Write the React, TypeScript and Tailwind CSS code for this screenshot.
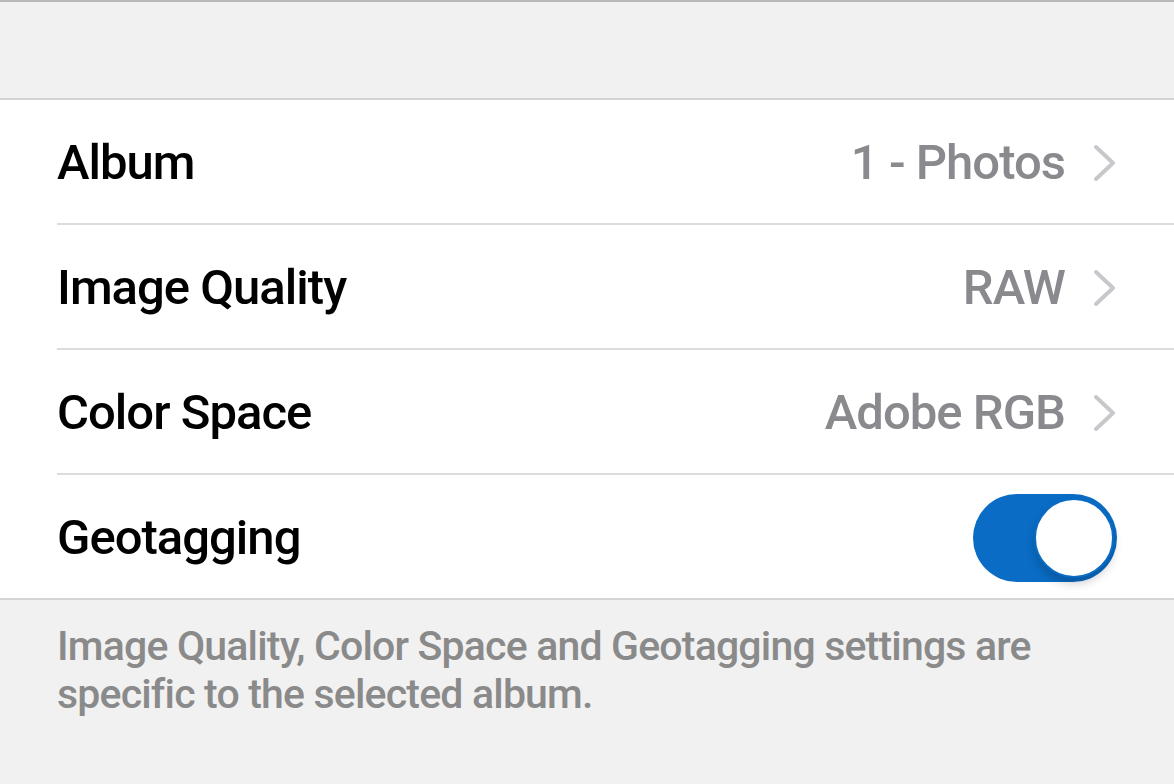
import React from 'react';

const font = { fontFamily: 'Roboto, "Noto Sans", sans-serif' };

function Chevron() {
  return (
    <svg width="24" height="38" viewBox="0 0 24 38" className="ml-[28px] shrink-0">
      <path d="M3 3 L20 19 L3 35" fill="none" stroke="#c7c7cc" strokeWidth="4" strokeLinecap="round" strokeLinejoin="round" />
    </svg>
  );
}

function Row({ label, value, last, children }: { label: string; value?: string; last?: boolean; children?: React.ReactNode }) {
  return (
    <div className="pl-[57px]">
      <div className={`flex items-center pr-[57px] pt-[2px] ${last ? 'h-[123px]' : 'h-[125px] border-b-2 border-[#dcdcdc]'}`}>
        <span className="flex-1 text-[49px] font-medium text-black tracking-[-0.02em]">{label}</span>
        {value && <span className="text-[49px] font-medium text-[#8a8a8e] tracking-[-0.02em]">{value}</span>}
        {value && <Chevron />}
        {children}
      </div>
    </div>
  );
}

function Toggle() {
  return (
    <div className="relative w-[144px] h-[88px] rounded-full bg-[#0a6cc4]">
      <div className="absolute right-[3px] top-[4px] w-[80px] h-[80px] rounded-full bg-white border-[2px] border-[#0a6cc4] shadow-[0_6px_10px_rgba(0,0,0,0.18)]" />
    </div>
  );
}

export default function App() {
  return (
    <div style={font} className="w-[1174px] h-[784px] bg-[#f1f1f1] border-t-2 border-[#b9b9b9] overflow-hidden">
      <div className="h-[96px]" />
      <div className="bg-white border-y-2 border-[#d4d4d4]">
        <Row label="Album" value="1 - Photos" />
        <Row label="Image Quality" value="RAW" />
        <Row label="Color Space" value="Adobe RGB" />
        <Row label="Geotagging" last>
          <Toggle />
        </Row>
      </div>
      <p className="px-[57px] pt-[22px] text-[41px] leading-[48px] font-medium text-[#8a8a8a] tracking-[-0.02em]">
        Image Quality, Color Space and Geotagging settings are specific to the selected album.
      </p>
    </div>
  );
}
